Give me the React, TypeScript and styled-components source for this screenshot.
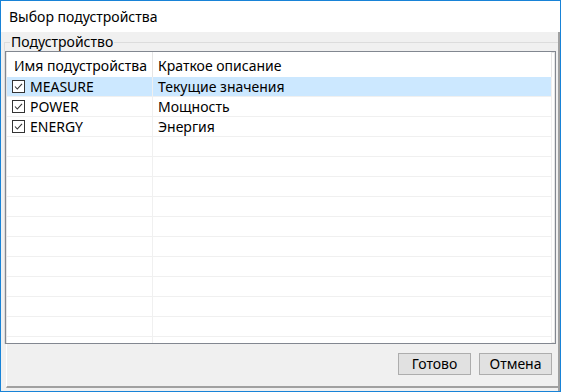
import React from "react";
import styled, { createGlobalStyle } from "styled-components";

const Global = createGlobalStyle`
  html, body { margin: 0; padding: 0; background: #ffffff; }
  * { box-sizing: border-box; }
`;

const Window = styled.div`
  width: 561px;
  height: 392px;
  border: 1px solid #1883d7;
  display: flex;
  flex-direction: column;
  font-family: "Noto Sans", "Open Sans", sans-serif;
  font-size: 14px;
  color: #000;
  background: #fff;
`;

const TitleBar = styled.div`
  height: 31px;
  flex: none;
  display: flex;
  align-items: center;
  padding-left: 8px;
  padding-bottom: 1px;
  background: #fff;
`;

const Client = styled.div`
  flex: 1;
  min-height: 0;
  display: flex;
  flex-direction: column;
  background: #f0f0f0;
  border-right: 2px solid #a0a0a0;
  padding: 4px 0 3px 3px;
`;

const Group = styled.fieldset`
  margin: 0;
  padding: 3px 0 0 0;
  border: 1px solid #dcdcdc;
  border-bottom: none;
  border-right: none;
  display: flex;
  flex-direction: column;
  flex: 1;
  min-height: 0;
  min-width: 0;
`;

const Legend = styled.legend`
  padding: 0 1px;
  margin-left: 5px;
  line-height: 12px;
  height: 12px;
`;

const List = styled.div`
  flex: 1;
  min-height: 0;
  border: 1px solid #828790;
  box-shadow: inset 0 0 0 1px #e6e6e6;
  background: #fff;
  margin-right: 2px;
  padding: 0 3px 0 1px;
  display: flex;
  flex-direction: column;
  overflow: hidden;
`;

const Row = styled.div<{ $header?: boolean; $selected?: boolean }>`
  display: grid;
  grid-template-columns: 146px 1fr;
  height: ${(p) => (p.$header ? 25 : 20)}px;
  flex: none;
  background: ${(p) => (p.$selected ? "#cce8ff" : "#fff")};
  border-bottom: ${(p) => (p.$header ? "none" : "1px solid #f0f0f0")};
`;

const Cell = styled.div<{ $header?: boolean; $first?: boolean }>`
  display: flex;
  align-items: center;
  gap: 5px;
  padding-left: ${(p) => (p.$header && p.$first ? 7 : 5)}px;
  padding-top: ${(p) => (p.$header ? 1 : 0)}px;
  border-right: 1px solid ${(p) => (p.$header ? "#e5e5e5" : "#f0f0f0")};
  white-space: nowrap;
  overflow: hidden;
`;

const Check = () => (
  <svg width="13" height="13" viewBox="0 0 13 13" style={{ flex: "none" }}>
    <rect x="0.5" y="0.5" width="12" height="12" fill="#fff" stroke="#333" />
    <path d="M3 6.5 L5.3 9 L10 3.8" fill="none" stroke="#333" strokeWidth="1.1" />
  </svg>
);

const Footer = styled.div`
  height: 44px;
  flex: none;
  display: flex;
  justify-content: flex-end;
  align-items: flex-start;
  gap: 8px;
  padding: 9px 6px 0 0;
  margin-left: 2px;
  border-left: 1px solid #fff;
  border-bottom: 2px solid #a0a0a0;
`;

const Button = styled.button`
  width: 73px;
  height: 22px;
  font-family: inherit;
  font-size: 14px;
  line-height: 18px;
  color: #000;
  background: #e1e1e1;
  border: 1px solid #adadad;
  padding: 0;
  margin: 0;
`;

const rows: { name: string; desc: string; checked: boolean }[] = [
  { name: "MEASURE", desc: "Текущие значения", checked: true },
  { name: "POWER", desc: "Мощность", checked: true },
  { name: "ENERGY", desc: "Энергия", checked: true },
];

export default function App() {
  const empty = Array.from({ length: 11 });
  return (
    <>
      <Global />
      <Window>
        <TitleBar>Выбор подустройства</TitleBar>
        <Client>
          <Group>
            <Legend>Подустройство</Legend>
            <List>
              <Row $header>
                <Cell $header $first>Имя подустройства</Cell>
                <Cell $header>Краткое описание</Cell>
              </Row>
              {rows.map((r, i) => (
                <Row key={r.name} $selected={i === 0}>
                  <Cell $first>
                    <Check />
                    {r.name}
                  </Cell>
                  <Cell>{r.desc}</Cell>
                </Row>
              ))}
              {empty.map((_, i) => (
                <Row key={i}>
                  <Cell $first />
                  <Cell />
                </Row>
              ))}
            </List>
          </Group>
          <Footer>
            <Button>Готово</Button>
            <Button>Отмена</Button>
          </Footer>
        </Client>
      </Window>
    </>
  );
}
